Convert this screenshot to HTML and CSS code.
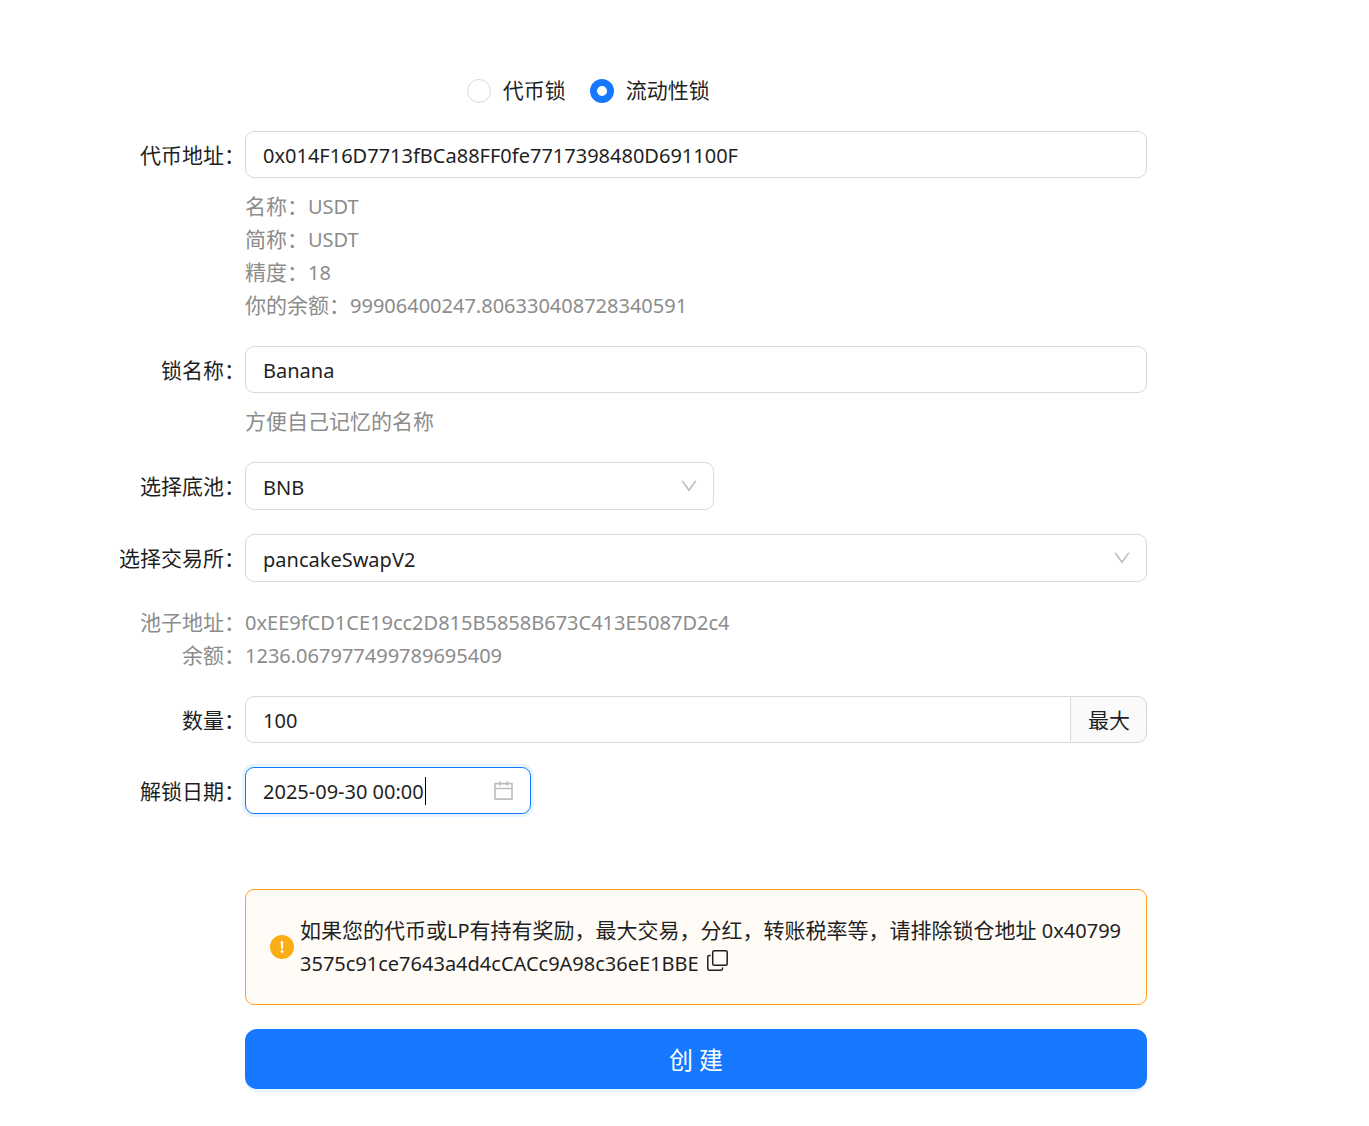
FILE: index.html
```html
<!DOCTYPE html>
<html lang="zh-CN">
<head>
  <meta charset="utf-8">
  <meta name="viewport" content="width=device-width, initial-scale=1">
  <title>创建锁仓</title>
  <link rel="stylesheet" href="styles.css">
</head>
<body>
  <form class="lock-form">
    <div class="type-row" role="radiogroup" aria-label="锁类型">
      <label class="radio"><input type="radio" name="type" value="token">代币锁</label>
      <label class="radio"><input type="radio" name="type" value="liquidity" checked>流动性锁</label>
    </div>

    <div class="row">
      <label class="label" for="token">代币地址：</label>
      <div class="content">
        <input class="box" id="token" type="text" value="0x014F16D7713fBCa88FF0fe7717398480D691100F">
        <div class="help">
          <div>名称：<span class="latin">USDT</span></div>
          <div>简称：<span class="latin">USDT</span></div>
          <div>精度：<span class="latin">18</span></div>
          <div>你的余额：<span class="latin">99906400247.806330408728340591</span></div>
        </div>
      </div>
    </div>

    <div class="row">
      <label class="label" for="name">锁名称：</label>
      <div class="content">
        <input class="box" id="name" type="text" value="Banana">
        <div class="help">方便自己记忆的名称</div>
      </div>
    </div>

    <div class="row">
      <label class="label" for="pool">选择底池：</label>
      <div class="content">
        <div class="select select-short">
          <select class="box" id="pool"><option>BNB</option></select>
          <svg class="arrow" viewBox="64 64 896 896" aria-hidden="true"><path d="M884 256h-75c-5.1 0-9.9 2.5-12.9 6.6L512 654.2 227.9 262.6c-3-4.1-7.8-6.6-12.9-6.6h-75c-6.5 0-10.3 7.4-6.5 12.7l352.6 486.1c12.8 17.6 39 17.6 51.7 0l352.6-486.1c3.9-5.3.1-12.7-6.4-12.7z"/></svg>
        </div>
      </div>
    </div>

    <div class="row">
      <label class="label" for="dex">选择交易所：</label>
      <div class="content">
        <div class="select">
          <select class="box" id="dex"><option>pancakeSwapV2</option></select>
          <svg class="arrow" viewBox="64 64 896 896" aria-hidden="true"><path d="M884 256h-75c-5.1 0-9.9 2.5-12.9 6.6L512 654.2 227.9 262.6c-3-4.1-7.8-6.6-12.9-6.6h-75c-6.5 0-10.3 7.4-6.5 12.7l352.6 486.1c12.8 17.6 39 17.6 51.7 0l352.6-486.1c3.9-5.3.1-12.7-6.4-12.7z"/></svg>
        </div>
      </div>
    </div>

    <div class="info">
      <div class="row">
        <span class="info-label">池子地址：</span>
        <span class="latin">0xEE9fCD1CE19cc2D815B5858B673C413E5087D2c4</span>
      </div>
      <div class="row">
        <span class="info-label">余额：</span>
        <span class="latin">1236.067977499789695409</span>
      </div>
    </div>

    <div class="row">
      <label class="label" for="amount">数量：</label>
      <div class="content amount">
        <input class="box" id="amount" type="text" value="100">
        <button class="max" type="button">最大</button>
      </div>
    </div>

    <div class="row">
      <label class="label" for="date">解锁日期：</label>
      <div class="content">
        <div class="date">
          <input id="date" type="text" value="2025-09-30 00:00">
          <span class="caret"></span>
          <svg class="calendar" viewBox="64 64 896 896" aria-hidden="true"><path d="M880 184H712v-64c0-4.400-3.600-8-8-8h-56c-4.400 0-8 3.600-8 8v64H384v-64c0-4.400-3.600-8-8-8h-56c-4.400 0-8 3.600-8 8v64H144c-17.700 0-32 14.300-32 32v664c0 17.700 14.300 32 32 32h736c17.700 0 32-14.300 32-32V216c0-17.700-14.300-32-32-32zm-40 656H184V460h656v380zM184 392V256h128v48c0 4.400 3.600 8 8 8h56c4.400 0 8-3.600 8-8v-48h256v48c0 4.400 3.600 8 8 8h56c4.400 0 8-3.600 8-8v-48h128v136H184z"/></svg>
        </div>
      </div>
    </div>

    <div class="row submit-row">
      <div class="content submit">
        <div class="alert" role="alert">
          <svg class="warn" viewBox="0 0 24 24" aria-hidden="true"><circle cx="12" cy="12" r="12" fill="#faad14"/><path d="M10.700 6.200h2.600l-.4 7.600h-1.800z" fill="#fff"/><circle cx="12" cy="16.500" r="1.400" fill="#fff"/></svg>
          <p>如果您的代币或<span class="latin">LP</span>有持有奖励，最大交易，分红，转账税率等，请排除锁仓地址<span class="latin"> 0x407993575c91ce7643a4d4cCACc9A98c36eE1BBE</span><button class="copy" type="button" aria-label="复制"><svg viewBox="0 0 21 21" aria-hidden="true"><rect x="5.700" y=".8" width="14.500" height="14.500" rx="1.500"/><path d="M3.700 5.500H2.300A1.500 1.500 0 0 0 .8 7v11.700a1.500 1.500 0 0 0 1.500 1.500H14a1.500 1.500 0 0 0 1.500-1.500v-1.200"/></svg></button></p>
        </div>
        <button class="create" type="submit">创 建</button>
      </div>
    </div>
  </form>
</body>
</html>
```
FILE: styles.css
```css
* {
  box-sizing: border-box;
}

body {
  margin: 0;
  background: #fff;
  color: #1f1f1f;
  font: 21px/33px "Noto Sans", "Noto Sans CJK SC", sans-serif;
}

input,
select,
button {
  margin: 0;
  font: inherit;
  color: inherit;
}

.lock-form {
  display: flex;
  flex-direction: column;
  gap: 24px;
  padding: 74px 8px 37px;
}

.row {
  display: grid;
  grid-template-columns: 237fr 902fr 214fr;
}

.type-row {
  display: flex;
  gap: 24px;
  padding-left: 33.9%;
}

.radio {
  display: flex;
  align-items: center;
  gap: 12px;
}

.radio input {
  appearance: none;
  width: 24px;
  height: 24px;
  border: 1px solid #d9d9d9;
  border-radius: 50%;
  background: #fff;
}

.radio input:checked {
  border: 7px solid #1677ff;
}

.label,
.info-label {
  text-align: right;
  white-space: nowrap;
}

.label {
  line-height: 48px;
  height: 47px;
}

.latin {
  font-size: 20px;
}

.content {
  grid-column: 2;
  min-width: 0;
}

.box {
  display: block;
  width: 100%;
  height: 47px;
  padding: 1px 17px 0;
  border: 1px solid #d9d9d9;
  border-radius: 9px;
  outline: 0;
  background: #fff;
  font-size: 20px;
}

.help {
  margin-top: 12px;
  color: #8c8c8c;
}

.select {
  display: grid;
  align-items: center;
}

.select > * {
  grid-area: 1 / 1;
}

.select-short {
  width: 52%;
}

.select .box {
  appearance: none;
  height: 48px;
  padding-top: 2px;
}

.arrow {
  justify-self: end;
  width: 18px;
  height: 18px;
  margin-right: 16px;
  fill: #bfbfbf;
  pointer-events: none;
}

.info {
  color: #8c8c8c;
}

.amount {
  display: flex;
}

.amount .box {
  flex: 1;
  min-width: 0;
  border-right: 0;
  border-radius: 9px 0 0 9px;
}

.max {
  padding: 1px 16px 0 17px;
  border: 1px solid #d9d9d9;
  border-radius: 0 9px 9px 0;
  background: #fafafa;
}

.date {
  display: flex;
  align-items: center;
  width: 286px;
  height: 47px;
  padding: 0 16px 0 17px;
  border: 1px solid #1677ff;
  border-radius: 9px;
  box-shadow: 0 0 0 3px #e6f4ff;
}

.date input {
  width: 162px;
  padding: 1px 0 0;
  border: 0;
  outline: 0;
  background: none;
  font-size: 20px;
}

.caret {
  width: 1px;
  height: 28px;
  background: #000;
}

.calendar {
  width: 21px;
  height: 21px;
  margin-left: auto;
  fill: #bfbfbf;
}

.submit {
  display: flex;
  flex-direction: column;
  gap: 24px;
}

.submit-row {
  margin-top: 51px;
}

.alert {
  display: flex;
  align-items: center;
  gap: 6px;
  padding: 24px;
  border: 1px solid #ff9f1a;
  border-radius: 9px;
  background: #fffcf7;
}

.warn {
  flex: none;
  width: 24px;
  height: 24px;
}

.alert p {
  flex: 1;
  margin: 0;
  word-break: break-all;
}

.copy {
  padding: 0;
  margin-left: 8px;
  border: 0;
  background: none;
  line-height: 21px;
}

.copy svg {
  display: block;
  width: 21px;
  height: 21px;
  fill: none;
  stroke: #1f1f1f;
  stroke-width: 1.5;
}

.create {
  height: 60px;
  border: 0;
  border-radius: 12px;
  background: #1677ff;
  box-shadow: 0 3px 0 #e6f4ff;
  color: #fff;
  font-size: 24px;
}
```
